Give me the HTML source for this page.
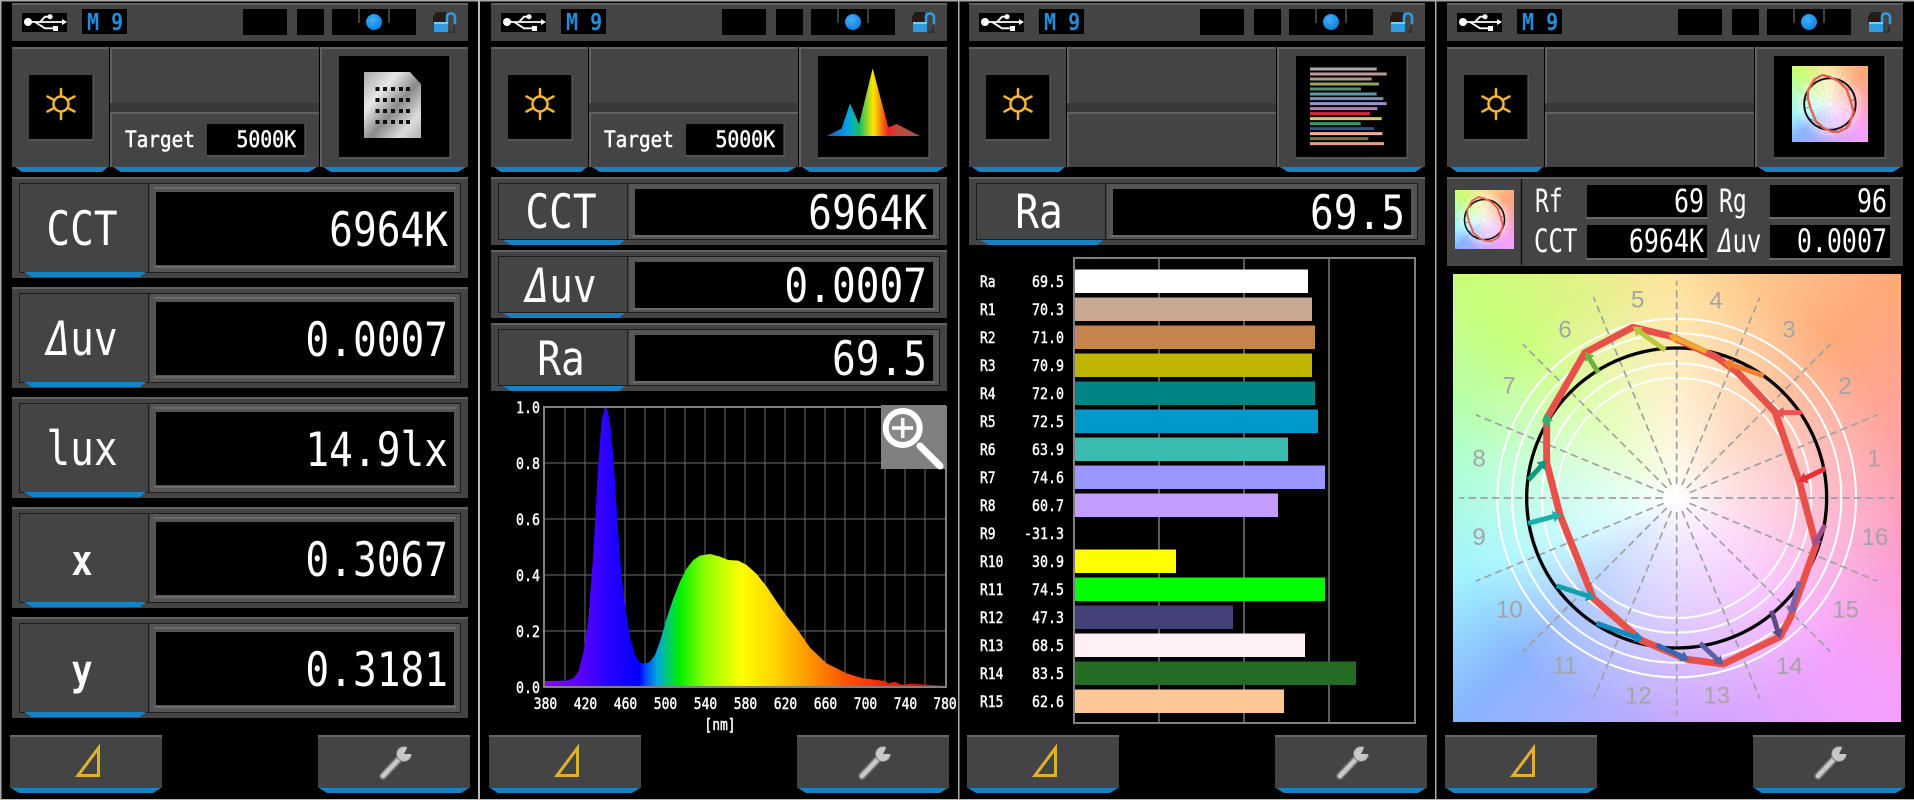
<!DOCTYPE html>
<html><head><meta charset="utf-8"><title>Spectrometer screens</title>
<style>
html,body{margin:0;padding:0;background:#000;width:1914px;height:800px;overflow:hidden}
svg.l{position:absolute;left:0;top:0}
text{font-family:"DejaVu Sans Mono","Liberation Mono",monospace;fill:#fff}
.g{position:absolute;background:radial-gradient(closest-side,#fff 0,rgba(255,255,255,.7) 22%,rgba(255,255,255,0) 100%),conic-gradient(#ffe29a 0deg,#ffa878 45deg,#ffa0b8 90deg,#f6a0ff 135deg,#c8a8ff 180deg,#88b4ff 225deg,#a0f4ff 250deg,#b0ffd0 280deg,#c8ff78 315deg,#ffe29a 360deg)}
.b{font-size:47px}
.m{font-size:23px;font-weight:bold;fill:#1f8fdc}
.t{font-size:22px;stroke:#fff;stroke-width:.5}
.s{font-size:16px;stroke:#fff;stroke-width:.45}
.v{font-size:32px}
.n{font-family:"Liberation Sans",sans-serif;font-size:72px;fill:#a4a4a4;text-anchor:middle}
</style></head><body>
<svg class="l" width="1914" height="800" viewBox="0 0 1914 800">
<defs>
<linearGradient id="chip" x1="0" y1="0" x2="1" y2="1"><stop offset="0" stop-color="#a8a8a8"/><stop offset=".3" stop-color="#e8e8e8"/><stop offset=".55" stop-color="#8a8a8a"/><stop offset=".8" stop-color="#dcdcdc"/><stop offset="1" stop-color="#b0b0b0"/></linearGradient>
<radialGradient id="dot" cx=".4" cy=".35" r=".7"><stop offset="0" stop-color="#40b0ff"/><stop offset="1" stop-color="#0a80d8"/></radialGradient>
<g id="top">
<rect x="12" y="3" width="456" height="38" fill="#444"/><path d="M12 4H468" stroke="#616161" stroke-width="2"/>
<rect x="22" y="13" width="45" height="19" fill="#000"/>
<path d="M28 22H64M35 22L45 28.3H54M40 22L45 16.7H50" stroke="#fff" stroke-width="1.8" fill="none"/>
<circle cx="28" cy="22" r="4" fill="#fff"/><circle cx="50" cy="16.7" r="2.6" fill="#fff"/><rect x="53" y="26" width="5" height="5" fill="#fff"/><path d="M62 19L67 22L62 25Z" fill="#fff"/>
<rect x="82" y="9" width="45" height="25" fill="#000"/>
<rect x="243" y="9" width="44" height="26" fill="#000"/><rect x="297" y="9" width="27" height="26" fill="#000"/><rect x="332" y="9" width="84" height="26" fill="#000"/>
<path d="M359 9V23M389 9V23" stroke="#555" stroke-width="1.5"/><circle cx="374" cy="22" r="8" fill="url(#dot)"/>
<path d="M436 12h10v11h-13v-6z" fill="#241c18"/><path d="M447 23V17Q447 13.500 451 13.500Q455 13.500 455 18V24" fill="none" stroke="#2f9be0" stroke-width="2.600"/><rect x="434" y="22" width="14" height="10" fill="#2f9be0"/><path d="M434 23H448" stroke="#9fd6f5" stroke-width="1.5"/><path d="M449 32h5v-6" stroke="#2a2a2a" stroke-width="1.500" fill="none"/>
<rect x="12" y="47" width="97" height="120" fill="#444"/><path d="M12 48H109" stroke="#616161" stroke-width="2"/>
<rect x="111" y="47" width="208" height="56" fill="#444"/><path d="M111 48H319M111 47V103" stroke="#616161" stroke-width="2"/>
<rect x="111" y="112" width="208" height="55" fill="#444"/><path d="M111 113H319M111 112V167" stroke="#616161" stroke-width="2"/>
<rect x="321" y="47" width="147" height="120" fill="#444"/><path d="M321 48H468M321 47V167" stroke="#616161" stroke-width="2"/>
<rect x="110" y="103" width="209" height="9" fill="#393939"/>
<rect x="29" y="75" width="64" height="64" fill="#000"/><path d="M93 75V140H29" stroke="#666" fill="none"/>
<circle cx="61" cy="104" r="7.5" fill="none" stroke="#f3b533" stroke-width="2.5"/>
<path d="M61 96.500V89M61 111.500V119M54.500 100.200L47.500 96.500M67.500 100.200L74.500 96.500M54.500 107.800L47.500 111.500M67.500 107.800L74.500 111.500" stroke="#f3b533" stroke-width="2.5" stroke-linecap="round"/>
<rect x="339" y="56" width="111" height="101" fill="#000"/><path d="M450 56V158H339" stroke="#666" fill="none"/>
<path d="M15 167H108L102 172H22Z" fill="#1782c2"/><path d="M323 167H466L458 172H331Z" fill="#1782c2"/>
<rect x="10" y="735" width="152" height="53" fill="#444"/><path d="M10 736H162" stroke="#666" stroke-width="2"/><path d="M11 788H161L153 793H19Z" fill="#1782c2"/>
<rect x="318" y="735" width="152" height="53" fill="#444"/><path d="M318 736H470" stroke="#666" stroke-width="2"/><path d="M319 788H469L461 793H327Z" fill="#1782c2"/>
<path d="M98.500 748V775.500H78Z" fill="none" stroke="#e0b030" stroke-width="3"/>
<path d="M383 776L400 758" stroke="#777" stroke-width="7.500" stroke-linecap="round"/><path d="M383 776L400 758" stroke="#c8c8c8" stroke-width="4.500" stroke-linecap="round"/>
<circle cx="404" cy="754" r="7.500" fill="#c8c8c8" stroke="#777"/><path d="M404 754L409 744L415 748L412 754Z" fill="#444"/>
</g>
<g id="tb"><path d="M113 167H317L309 172H121Z" fill="#1782c2"/>
<rect x="207" y="124" width="98" height="31" fill="#000"/><path d="M305 124V156H207" stroke="#666" fill="none"/></g>
<g id="rb">
<rect x="12" y="0" width="456" height="101" fill="#444"/><path d="M12 1H468" stroke="#616161" stroke-width="2"/>
<rect x="19.500" y="6.500" width="441" height="89" fill="#3e3e3e" stroke="#1c1c1c"/>
<rect x="20" y="7" width="128" height="88" fill="#444"/>
<path d="M148.500 7V95" stroke="#1c1c1c"/><rect x="150" y="7" width="310" height="88" fill="#555"/>
<rect x="156" y="15" width="298" height="73" fill="#000"/>
<path d="M154 90H456M154 11H456" stroke="#6b6b6b" stroke-width="2"/>
<path d="M24 95H146L140 100H32Z" fill="#1782c2"/>
</g>
<g id="rs">
<rect x="12" y="0" width="456" height="68" fill="#444"/><path d="M12 1H468" stroke="#616161" stroke-width="2"/>
<rect x="19.500" y="6.500" width="441" height="56" fill="#3e3e3e" stroke="#1c1c1c"/>
<rect x="20" y="7" width="128" height="55" fill="#444"/>
<path d="M148.500 7V62" stroke="#1c1c1c"/><rect x="150" y="7" width="310" height="55" fill="#555"/>
<rect x="156" y="12" width="298" height="46" fill="#000"/>
<path d="M154 59H456" stroke="#6b6b6b" stroke-width="2"/>
<path d="M24 63H146L140 68H32Z" fill="#1782c2"/>
</g>
</defs>
<!-- separators -->
<rect x="0" y="0" width="1914" height="1.500" fill="#aaa"/>
<rect x="0" y="799" width="1914" height="1" fill="#bbb"/>
<rect x="0" y="0" width="1.500" height="800" fill="#aaa"/><rect x="478" y="0" width="2" height="800" fill="#bbb"/><rect x="958" y="0" width="1.500" height="800" fill="#aaa"/><rect x="1435" y="0" width="1.500" height="800" fill="#aaa"/>

<!-- PANEL 1 -->
<g>
<use href="#top"/><use href="#tb"/>
<path d="M364 72H410L421 84V138H364Z" fill="url(#chip)"/>
<path d="M375.500 89h4M383 89h4M391 89h4M399 89h4M406 89h4M375.500 100h4M383 100h4M391 100h4M399 100h4M406 100h4M375.500 111h4M383 111h4M391 111h4M399 111h4M406 111h4M375.500 122h4M383 122h4M391 122h4M399 122h4M406 122h4" stroke="#111" stroke-width="4"/>
<text class="m" transform="translate(87,30) scale(.87,1)">M 9</text>
<text class="t" transform="translate(125,147) scale(.88,1)">Target</text>
<text class="t" text-anchor="end" transform="translate(296,147) scale(.9,1)">5000K</text>
<use href="#rb" y="177"/><use href="#rb" y="287"/><use href="#rb" y="397"/><use href="#rb" y="507"/><use href="#rb" y="617"/>
<text class="b" text-anchor="middle" transform="translate(82,245) scale(.84,1)">CCT</text>
<text class="b" text-anchor="end" transform="translate(448,246) scale(.84,1)">6964K</text>
<text class="b" text-anchor="middle" transform="translate(82,355) scale(.84,1)"><tspan font-style="italic">Δ</tspan>uv</text>
<text class="b" text-anchor="end" transform="translate(448,356) scale(.84,1)">0.0007</text>
<text class="b" text-anchor="middle" transform="translate(82,465) scale(.84,1)">lux</text>
<text class="b" text-anchor="end" transform="translate(448,466) scale(.84,1)">14.9lx</text>
<text class="b" text-anchor="middle" font-weight="bold" style="font-size:42px" transform="translate(82,575) scale(.84,1)">x</text>
<text class="b" text-anchor="end" transform="translate(448,576) scale(.84,1)">0.3067</text>
<text class="b" text-anchor="middle" font-weight="bold" style="font-size:42px" transform="translate(82,685) scale(.84,1)">y</text>
<text class="b" text-anchor="end" transform="translate(448,686) scale(.84,1)">0.3181</text>
</g>

<!-- PANEL 2 -->
<g transform="translate(479,0)">
<use href="#top"/><use href="#tb"/>
<text class="m" transform="translate(87,30) scale(.87,1)">M 9</text>
<text class="t" transform="translate(125,147) scale(.88,1)">Target</text>
<text class="t" text-anchor="end" transform="translate(296,147) scale(.9,1)">5000K</text>
<use href="#rs" y="177"/><use href="#rs" y="250"/><use href="#rs" y="323"/>
<text class="b" text-anchor="middle" transform="translate(82,228) scale(.84,1)">CCT</text>
<text class="b" text-anchor="end" transform="translate(448,229) scale(.84,1)">6964K</text>
<text class="b" text-anchor="middle" transform="translate(82,302) scale(.84,1)"><tspan font-style="italic">Δ</tspan>uv</text>
<text class="b" text-anchor="end" transform="translate(448,302) scale(.84,1)">0.0007</text>
<text class="b" text-anchor="middle" transform="translate(82,375) scale(.84,1)">Ra</text>
<text class="b" text-anchor="end" transform="translate(448,375) scale(.84,1)">69.5</text>
</g>
<svg x="480" y="0" width="480" height="400" viewBox="0 0 1440 1200">
<defs><linearGradient id="si" gradientUnits="userSpaceOnUse" x1="1040" y1="0" x2="1320" y2="0"><stop offset="0" stop-color="#2a50b0"/><stop offset=".22" stop-color="#00a0e8"/><stop offset=".36" stop-color="#20c060"/><stop offset=".5" stop-color="#ffe800"/><stop offset=".66" stop-color="#f02020"/><stop offset=".76" stop-color="#c04838"/><stop offset="1" stop-color="#a05848"/></linearGradient></defs>
<path d="M1040 408L1085 385L1110 310L1137 372L1178 205L1225 382L1250 372L1320 408Z" fill="url(#si)"/>
</svg>
<path d="M565 407V687M585 407V687M605 407V687M625 407V687M645 407V687M665 407V687M685 407V687M705 407V687M725 407V687M745 407V687M765 407V687M785 407V687M805 407V687M825 407V687M845 407V687M865 407V687M885 407V687M905 407V687M925 407V687M544 463H946M544 519H946M544 575H946M544 631H946" stroke="#6e6e6e" stroke-width="1"/>
<svg x="480" y="380" width="480" height="360" viewBox="0 0 1440 1080">
<defs><linearGradient id="sp" gradientUnits="userSpaceOnUse" x1="195" y1="0" x2="1400" y2="0">
<stop offset="0" stop-color="#7a12e8"/><stop offset=".09" stop-color="#5a00ff"/><stop offset=".15" stop-color="#2c00ff"/><stop offset=".235" stop-color="#0000ff"/><stop offset=".25" stop-color="#0048ff"/><stop offset=".28" stop-color="#00a8d8"/><stop offset=".335" stop-color="#00f000"/><stop offset=".4" stop-color="#90ff00"/><stop offset=".49" stop-color="#ffff00"/><stop offset=".58" stop-color="#ffd000"/><stop offset=".665" stop-color="#ff9000"/><stop offset=".75" stop-color="#ff5000"/><stop offset=".87" stop-color="#f02000"/><stop offset="1" stop-color="#b00000"/></linearGradient></defs>
<path d="M195 922L195 903L260 902L280 895L295 875L310 820L325 720L340 520L355 250L365 120L375 85L382 85L390 130L400 230L412 420L425 590L437 690L450 770L465 825L480 848L495 852L510 845L525 825L540 785L560 715L580 655L600 605L620 565L640 540L660 527L690 522L720 530L745 540L775 542L800 555L830 582L860 620L890 665L920 708L950 745L990 803L1040 850L1100 880L1150 895L1215 903L1225 910L1245 906L1265 914L1300 911L1360 915L1398 918V922Z" fill="url(#sp)"/>
</svg>
<rect x="544" y="407" width="402" height="280" fill="none" stroke="#808080" stroke-width="2"/>
<rect x="881" y="405" width="65" height="64" fill="#808080"/>
<circle cx="902.700" cy="428" r="17" fill="#888" stroke="#fff" stroke-width="6"/>
<path d="M892 428H913M902.700 418V438" stroke="#fff" stroke-width="3.500"/>
<path d="M920 446L940 466" stroke="#fff" stroke-width="7" stroke-linecap="round"/>
<g>
<text class="s" text-anchor="end" transform="translate(540,413) scale(.83,1)">1.0</text>
<text class="s" text-anchor="end" transform="translate(540,469) scale(.83,1)">0.8</text>
<text class="s" text-anchor="end" transform="translate(540,525) scale(.83,1)">0.6</text>
<text class="s" text-anchor="end" transform="translate(540,581) scale(.83,1)">0.4</text>
<text class="s" text-anchor="end" transform="translate(540,637) scale(.83,1)">0.2</text>
<text class="s" text-anchor="end" transform="translate(540,693) scale(.83,1)">0.0</text>
<text class="s" text-anchor="middle" transform="translate(545.500,709) scale(.81,1)">380</text>
<text class="s" text-anchor="middle" transform="translate(585.500,709) scale(.81,1)">420</text>
<text class="s" text-anchor="middle" transform="translate(625.500,709) scale(.81,1)">460</text>
<text class="s" text-anchor="middle" transform="translate(665.500,709) scale(.81,1)">500</text>
<text class="s" text-anchor="middle" transform="translate(705.500,709) scale(.81,1)">540</text>
<text class="s" text-anchor="middle" transform="translate(745.500,709) scale(.81,1)">580</text>
<text class="s" text-anchor="middle" transform="translate(785.500,709) scale(.81,1)">620</text>
<text class="s" text-anchor="middle" transform="translate(825.500,709) scale(.81,1)">660</text>
<text class="s" text-anchor="middle" transform="translate(865.500,709) scale(.81,1)">700</text>
<text class="s" text-anchor="middle" transform="translate(905.500,709) scale(.81,1)">740</text>
<text class="s" text-anchor="middle" transform="translate(945,709) scale(.81,1)">780</text>
<text class="s" text-anchor="middle" transform="translate(720,730) scale(.81,1)">[nm]</text>
</g>

<!-- PANEL 3 -->
<g transform="translate(957,0)">
<use href="#top"/>
<text class="m" transform="translate(87,30) scale(.87,1)">M 9</text>
<use href="#rs" y="177"/>
<text class="b" text-anchor="middle" transform="translate(82,228) scale(.84,1)">Ra</text>
<text class="b" text-anchor="end" transform="translate(448,229) scale(.84,1)">69.5</text>
</g>
<svg x="960" y="0" width="480" height="400" viewBox="0 0 1440 1200">
<g stroke-width="9">
<path d="M1050 207H1250" stroke="#a8a8a8"/><path d="M1050 222H1280" stroke="#c09898"/><path d="M1050 237H1235" stroke="#a89880"/><path d="M1050 252H1257" stroke="#98a060"/><path d="M1050 267H1203" stroke="#5a9070"/><path d="M1050 282H1250" stroke="#6098a8"/><path d="M1050 296H1270" stroke="#7090c0"/><path d="M1050 311H1280" stroke="#a090d0"/><path d="M1050 326H1252" stroke="#b080b0"/><path d="M1050 341H1230" stroke="#d02840"/><path d="M1050 356H1265" stroke="#d8c868"/><path d="M1050 371H1202" stroke="#409860"/><path d="M1050 386H1242" stroke="#305090"/><path d="M1050 401H1267" stroke="#f0b0a0"/><path d="M1050 416H1225" stroke="#707840"/><path d="M1050 431H1272" stroke="#e8a080"/>
</g></svg>
<path d="M1159 258V723M1244 258V723M1329 258V723" stroke="#777" stroke-width="1.500"/>
<rect x="1074" y="258" width="341" height="465" fill="none" stroke="#808080" stroke-width="2"/>
<rect x="1075" y="269.500" width="233" height="23.500" fill="#fff"/>
<rect x="1075" y="297.500" width="237" height="23.500" fill="#c9a892"/>
<rect x="1075" y="325.500" width="240" height="23.500" fill="#c5834d"/>
<rect x="1075" y="353.500" width="237" height="23.500" fill="#bfb500"/>
<rect x="1075" y="381.500" width="240" height="23.500" fill="#008585"/>
<rect x="1075" y="409.500" width="243" height="23.500" fill="#0099cc"/>
<rect x="1075" y="437.500" width="213" height="23.500" fill="#3bbcb0"/>
<rect x="1075" y="465.500" width="250" height="23.500" fill="#9a97ff"/>
<rect x="1075" y="493.500" width="203" height="23.500" fill="#c39dff"/>
<rect x="1075" y="549.500" width="101" height="23.500" fill="#ffff00"/>
<rect x="1075" y="577.500" width="250" height="23.500" fill="#00ff00"/>
<rect x="1075" y="605.500" width="158" height="23.500" fill="#444078"/>
<rect x="1075" y="633.500" width="230" height="23.500" fill="#fff0f5"/>
<rect x="1075" y="661.500" width="281" height="23.500" fill="#246b24"/>
<rect x="1075" y="689.500" width="209" height="23.500" fill="#ffc896"/>
<text class="s" transform="translate(980,287) scale(.81,1)">Ra</text><text class="s" text-anchor="end" transform="translate(1064,287) scale(.83,1)">69.5</text>
<text class="s" transform="translate(980,315) scale(.81,1)">R1</text><text class="s" text-anchor="end" transform="translate(1064,315) scale(.83,1)">70.3</text>
<text class="s" transform="translate(980,343) scale(.81,1)">R2</text><text class="s" text-anchor="end" transform="translate(1064,343) scale(.83,1)">71.0</text>
<text class="s" transform="translate(980,371) scale(.81,1)">R3</text><text class="s" text-anchor="end" transform="translate(1064,371) scale(.83,1)">70.9</text>
<text class="s" transform="translate(980,399) scale(.81,1)">R4</text><text class="s" text-anchor="end" transform="translate(1064,399) scale(.83,1)">72.0</text>
<text class="s" transform="translate(980,427) scale(.81,1)">R5</text><text class="s" text-anchor="end" transform="translate(1064,427) scale(.83,1)">72.5</text>
<text class="s" transform="translate(980,455) scale(.81,1)">R6</text><text class="s" text-anchor="end" transform="translate(1064,455) scale(.83,1)">63.9</text>
<text class="s" transform="translate(980,483) scale(.81,1)">R7</text><text class="s" text-anchor="end" transform="translate(1064,483) scale(.83,1)">74.6</text>
<text class="s" transform="translate(980,511) scale(.81,1)">R8</text><text class="s" text-anchor="end" transform="translate(1064,511) scale(.83,1)">60.7</text>
<text class="s" transform="translate(980,539) scale(.81,1)">R9</text><text class="s" text-anchor="end" transform="translate(1064,539) scale(.83,1)">-31.3</text>
<text class="s" transform="translate(980,567) scale(.81,1)">R10</text><text class="s" text-anchor="end" transform="translate(1064,567) scale(.83,1)">30.9</text>
<text class="s" transform="translate(980,595) scale(.81,1)">R11</text><text class="s" text-anchor="end" transform="translate(1064,595) scale(.83,1)">74.5</text>
<text class="s" transform="translate(980,623) scale(.81,1)">R12</text><text class="s" text-anchor="end" transform="translate(1064,623) scale(.83,1)">47.3</text>
<text class="s" transform="translate(980,651) scale(.81,1)">R13</text><text class="s" text-anchor="end" transform="translate(1064,651) scale(.83,1)">68.5</text>
<text class="s" transform="translate(980,679) scale(.81,1)">R14</text><text class="s" text-anchor="end" transform="translate(1064,679) scale(.83,1)">83.5</text>
<text class="s" transform="translate(980,707) scale(.81,1)">R15</text><text class="s" text-anchor="end" transform="translate(1064,707) scale(.83,1)">62.6</text>

<!-- PANEL 4 -->
<g transform="translate(1435,0)">
<use href="#top"/>
<text class="m" transform="translate(87,30) scale(.87,1)">M 9</text>
</g>
<rect x="1447" y="177" width="456" height="89" fill="#444"/><path d="M1447 178H1903" stroke="#616161" stroke-width="2"/>
<path d="M1521.500 179V265" stroke="#111" stroke-width="1.500"/>
<rect x="1587" y="185" width="120" height="32" fill="#000"/><path d="M1586 218H1708" stroke="#6b6b6b" stroke-width="2"/>
<rect x="1587" y="225" width="120" height="33" fill="#000"/><path d="M1586 259H1708" stroke="#6b6b6b" stroke-width="2"/>
<rect x="1770" y="185" width="120" height="32" fill="#000"/><path d="M1769 218H1891" stroke="#6b6b6b" stroke-width="2"/>
<rect x="1770" y="225" width="120" height="33" fill="#000"/><path d="M1769 259H1891" stroke="#6b6b6b" stroke-width="2"/>
<text class="v" transform="translate(1535,212) scale(.72,1)">Rf</text>
<text class="v" transform="translate(1534,252) scale(.75,1)">CCT</text>
<text class="v" transform="translate(1719,212) scale(.72,1)">Rg</text>
<text class="v" transform="translate(1718,252) scale(.75,1)"><tspan font-style="italic">Δ</tspan>uv</text>
<text class="v" text-anchor="end" transform="translate(1704,212) scale(.78,1)">69</text>
<text class="v" text-anchor="end" transform="translate(1704,252) scale(.78,1)">6964K</text>
<text class="v" text-anchor="end" transform="translate(1887,212) scale(.78,1)">96</text>
<text class="v" text-anchor="end" transform="translate(1887,252) scale(.78,1)">0.0007</text>
</svg>

<div class="g" style="left:1453px;top:274px;width:448px;height:448px"></div>
<div class="g" style="left:1792px;top:66px;width:76px;height:76px"></div>
<div class="g" style="left:1455px;top:190px;width:59px;height:59px"></div>

<svg class="l" width="1914" height="800" viewBox="0 0 1914 800">
<defs>
<g id="ring">
<g fill="none" stroke="#fff" stroke-width="6"><circle cx="680" cy="684" r="538"/><circle cx="680" cy="684" r="494"/><circle cx="680" cy="684" r="448"/><circle cx="680" cy="684" r="404"/><circle cx="680" cy="684" r="360"/></g>
<g transform="translate(680,684)" stroke="#a0a0a0" stroke-width="5" stroke-dasharray="22 13" fill="none">
<path d="M42 0H652"/><path d="M42 0H652" transform="rotate(22.500)"/><path d="M42 0H652" transform="rotate(45)"/><path d="M42 0H652" transform="rotate(67.500)"/><path d="M42 0H652" transform="rotate(90)"/><path d="M42 0H652" transform="rotate(112.500)"/><path d="M42 0H652" transform="rotate(135)"/><path d="M42 0H652" transform="rotate(157.500)"/><path d="M42 0H652" transform="rotate(180)"/><path d="M42 0H652" transform="rotate(202.500)"/><path d="M42 0H652" transform="rotate(225)"/><path d="M42 0H652" transform="rotate(247.500)"/><path d="M42 0H652" transform="rotate(270)"/><path d="M42 0H652" transform="rotate(292.500)"/><path d="M42 0H652" transform="rotate(315)"/><path d="M42 0H652" transform="rotate(337.500)"/>
</g>
<circle cx="680" cy="684" r="450" fill="none" stroke="#000" stroke-width="10"/>
<path d="M548 172L660 198L800 262L860 305L975 425L1048 635L1098 825L1020 1045L990 1100L820 1182L710 1168L572 1110L430 985L330 735L290 578L290 445L405 248Z" fill="none" stroke="#e8504a" stroke-width="21" stroke-linejoin="round"/>
<g transform="translate(1045,635) rotate(154)" fill="#e62e33" stroke="#e62e33"><path d="M-91 0H-20" stroke-width="15"/><path d="M0 0L-26 -17V17Z" stroke="none"/></g>
<g transform="translate(975,428) rotate(180)" fill="#e85555" stroke="#e85555"><path d="M-80 0H-20" stroke-width="15"/><path d="M0 0L-26 -17V17Z" stroke="none"/></g>
<g transform="translate(820,275) rotate(199.400)" fill="#f08030" stroke="#f08030"><path d="M-129 0H-20" stroke-width="15"/><path d="M0 0L-26 -17V17Z" stroke="none"/></g>
<g transform="translate(655,195) rotate(203.500)" fill="#f0a830" stroke="#f0a830"><path d="M-125 0H-20" stroke-width="15"/><path d="M0 0L-26 -17V17Z" stroke="none"/></g>
<g transform="translate(548,170) rotate(215.800)" fill="#b8c840" stroke="#b8c840"><path d="M-120 0H-20" stroke-width="15"/><path d="M0 0L-26 -17V17Z" stroke="none"/></g>
<g transform="translate(405,245) rotate(237.600)" fill="#70b040" stroke="#70b040"><path d="M-75 0H-20" stroke-width="15"/><path d="M0 0L-26 -17V17Z" stroke="none"/></g>
<g transform="translate(290,428) rotate(267)" fill="#30b070" stroke="#30b070"><path d="M-42 0H-20" stroke-width="15"/><path d="M0 0L-26 -17V17Z" stroke="none"/></g>
<g transform="translate(290,570) rotate(-47.500)" fill="#109878" stroke="#109878"><path d="M-81 0H-20" stroke-width="15"/><path d="M0 0L-26 -17V17Z" stroke="none"/></g>
<g transform="translate(335,733) rotate(-15)" fill="#18b0a8" stroke="#18b0a8"><path d="M-104 0H-20" stroke-width="15"/><path d="M0 0L-26 -17V17Z" stroke="none"/></g>
<g transform="translate(435,985) rotate(18)" fill="#10a0b0" stroke="#10a0b0"><path d="M-121 0H-20" stroke-width="15"/><path d="M0 0L-26 -17V17Z" stroke="none"/></g>
<g transform="translate(580,1110) rotate(19.700)" fill="#1088c0" stroke="#1088c0"><path d="M-149 0H-20" stroke-width="15"/><path d="M0 0L-26 -17V17Z" stroke="none"/></g>
<g transform="translate(718,1170) rotate(24.700)" fill="#3868b0" stroke="#3868b0"><path d="M-108 0H-20" stroke-width="15"/><path d="M0 0L-26 -17V17Z" stroke="none"/></g>
<g transform="translate(820,1185) rotate(43)" fill="#5860a8" stroke="#5860a8"><path d="M-96 0H-20" stroke-width="15"/><path d="M0 0L-26 -17V17Z" stroke="none"/></g>
<g transform="translate(990,1105) rotate(73)" fill="#604888" stroke="#604888"><path d="M-87 0H-20" stroke-width="15"/><path d="M0 0L-26 -17V17Z" stroke="none"/></g>
<g transform="translate(1020,1035) rotate(105.600)" fill="#8060a8" stroke="#8060a8"><path d="M-104 0H-20" stroke-width="15"/><path d="M0 0L-26 -17V17Z" stroke="none"/></g>
<g transform="translate(1090,830) rotate(118.300)" fill="#a05090" stroke="#a05090"><path d="M-74 0H-20" stroke-width="15"/><path d="M0 0L-26 -17V17Z" stroke="none"/></g>
</g>
<g id="ringb">
<use href="#ring"/>
<circle cx="680" cy="684" r="455" fill="none" stroke="#111" stroke-width="34"/>
<path d="M548 172L660 198L800 262L860 305L975 425L1048 635L1098 825L1020 1045L990 1100L820 1182L710 1168L572 1110L430 985L330 735L290 578L290 445L405 248Z" fill="none" stroke="#e8604a" stroke-width="42" stroke-linejoin="round"/>
</g>
</defs>
<svg x="1450" y="270" width="464" height="460" viewBox="0 0 1392 1380">
<use href="#ring"/>
<text class="n" x="1272" y="590">1</text><text class="n" x="1185" y="372">2</text><text class="n" x="1017" y="203">3</text><text class="n" x="798" y="115">4</text><text class="n" x="563" y="112">5</text><text class="n" x="345" y="203">6</text><text class="n" x="177" y="370">7</text><text class="n" x="87" y="590">8</text><text class="n" x="87" y="825">9</text><text class="n" x="178" y="1043">10</text><text class="n" x="345" y="1210">11</text><text class="n" x="565" y="1300">12</text><text class="n" x="800" y="1300">13</text><text class="n" x="1018" y="1212">14</text><text class="n" x="1187" y="1043">15</text><text class="n" x="1275" y="825">16</text>
</svg>
<g transform="translate(1792,66) scale(.0566) translate(-10,-12)"><use href="#ringb"/></g>
<g transform="translate(1455,190) scale(.044) translate(-10,-12)"><use href="#ringb"/></g>
</svg>
</body></html>
